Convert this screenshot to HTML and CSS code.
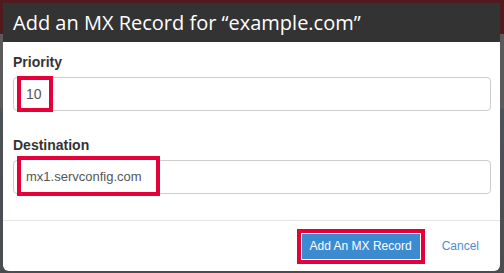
FILE: index.html
```html
<!DOCTYPE html>
<html>
<head>
<meta charset="utf-8">
<link rel="stylesheet" href="styles.css">
</head>
<body>
<div class="backdrop">
  <div class="modal">
    <div class="modal-header">Add an MX Record for “example.com”</div>
    <div class="modal-body">
      <div class="field">
        <div class="label">Priority</div>
        <div class="input"><span class="mark mark-priority">10</span></div>
      </div>
      <div class="field">
        <div class="label">Destination</div>
        <div class="input"><span class="mark mark-dest">mx1.servconfig.com</span></div>
      </div>
    </div>
    <div class="modal-footer">
      <button class="btn-primary">Add An MX Record</button>
      <a class="cancel">Cancel</a>
    </div>
  </div>
</div>
</body>
</html>
```

FILE: styles.css
```css
html, body {
  margin: 0;
  padding: 0;
}
body {
  width: 504px;
  height: 273px;
  overflow: hidden;
  background: linear-gradient(to bottom, #4f1b1d 0, #4f1b1d 34px, #5a5a5a 34px, #5a5a5a 108px, #4d5257 109px, #4a4d50 100%);
}
.backdrop {
  padding: 3px 3px 0 3px;
}
.modal {
  width: 497px;
  height: 268px;
  background: #fff;
  border-radius: 0 0 6px 6px;
  display: flex;
  flex-direction: column;
  overflow: hidden;
}
.modal-header {
  height: 39px;
  background: #333;
  color: #fff;
  font-family: "Open Sans", sans-serif;
  font-size: 20px;
  display: flex;
  align-items: center;
  padding-left: 10px;
  padding-bottom: 1px;
  box-sizing: border-box;
}
.modal-body {
  padding: 10px 9px 26px 10px;
  display: flex;
  flex-direction: column;
  gap: 24px;
}
.label {
  font-family: "Liberation Sans", Arial, sans-serif;
  font-weight: bold;
  font-size: 14px;
  line-height: 20px;
  color: #333;
  margin-bottom: 5px;
}
.input {
  height: 34px;
  box-sizing: border-box;
  border: 1px solid #ccc;
  border-radius: 4px;
  position: relative;
  font-family: "Liberation Sans", Arial, sans-serif;
  font-size: 13px;
  color: #555;
}
.mark {
  position: absolute;
  left: 3px;
  border: 4px solid #e6003a;
  box-sizing: border-box;
  display: flex;
  align-items: center;
  padding-left: 5px;
  background: #fff;
}
.mark-priority {
  top: -2px;
  width: 36px;
  height: 36px;
  font-size: 14px;
}
.mark-dest {
  top: -5px;
  width: 143px;
  height: 40px;
}
.modal-footer {
  border-top: 1px solid #e5e5e5;
  flex: 1;
  display: flex;
  align-items: center;
  justify-content: flex-end;
  gap: 22px;
  padding-right: 21px;
}
.btn-primary {
  font-family: "Liberation Sans", Arial, sans-serif;
  font-size: 12px;
  line-height: 17px;
  color: #fff;
  background: #3c8bd0;
  border: none;
  border-radius: 0;
  padding: 4px 8px;
  height: 25px;
  white-space: nowrap;
  outline: 4px solid #e6003a;
  outline-offset: 1px;
  margin-top: 1px;
}
.cancel {
  font-family: "Liberation Sans", Arial, sans-serif;
  font-size: 12px;
  color: #4a8fd3;
}
```
